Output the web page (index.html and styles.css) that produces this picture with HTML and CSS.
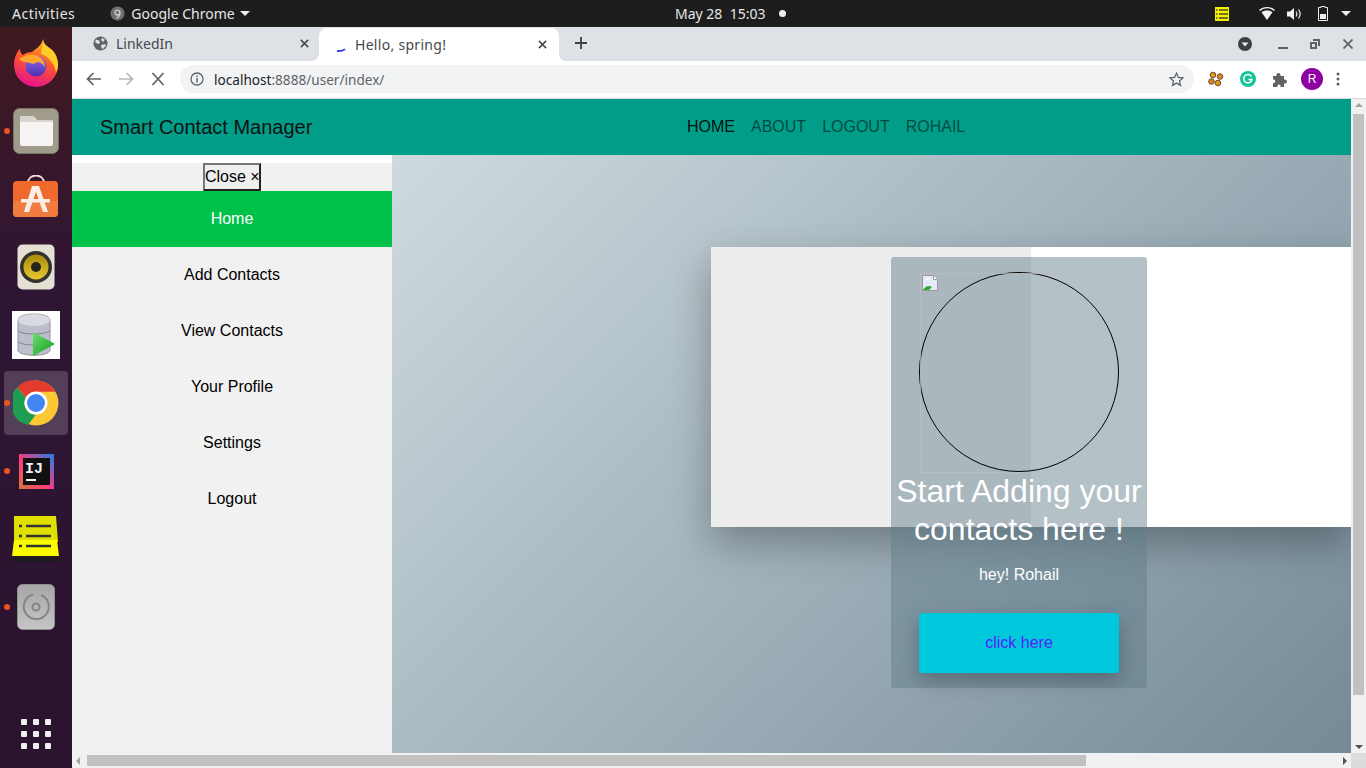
FILE: index.html
```html
<!DOCTYPE html>
<html lang="en">
<head>
    <meta charset="UTF-8">
    <title>Hello, spring!</title>
    <link rel="stylesheet" href="styles.css">
</head>
<body>
    <div class="topbar">
        <span class="activities">Activities</span>
        <div class="app-menu">
            <svg width="15" height="15" viewBox="0 0 16 16"><circle cx="8" cy="8" r="7.5" fill="#6f6f6f"/><circle cx="8" cy="7" r="2.6" fill="none" stroke="#ccc" stroke-width="1.4"/><path d="M10.6 7c0 3-1.5 5-3.6 6" fill="none" stroke="#ccc" stroke-width="1.4"/></svg>
            <span>Google Chrome</span>
            <i class="caret"></i>
        </div>
        <div class="clock">May 28&nbsp;&nbsp;15:03<i class="clock-dot"></i></div>
        <div class="tray">
            <svg class="tray-notes" width="14" height="14" viewBox="0 0 14 14"><rect width="14" height="14" fill="#f3f000"/><path d="M1 3h1.500M4 3h9M1 7h1.500M4 7h9M1 11h1.500M4 11h9" stroke="#4a4a20" stroke-width="1.500"/></svg>
            <svg class="tray-wifi" width="16" height="13" viewBox="0 0 16 13"><path d="M.5 3.500C4.500-.3 11.500-.3 15.500 3.500" fill="none" stroke="#f2f2f2" stroke-width="1.300"/><path d="M2.500 5.300C5.500 3 10.500 3 13.500 5.300L8 13z" fill="#f2f2f2"/></svg>
            <svg class="tray-vol" width="15" height="14" viewBox="0 0 15 14"><path d="M0 4.500h3L7 1v12L3 9.500H0z" fill="#f2f2f2"/><path d="M9 4.500c1 1.500 1 3.500 0 5M11.500 2.500c2 2.800 2 6.200 0 9" fill="none" stroke="#f2f2f2" stroke-width="1.200"/></svg>
            <svg class="tray-bat" width="10" height="15" viewBox="0 0 10 15"><path d="M3 .5h4v1h2.500v13H.5v-13H3z" fill="none" stroke="#eee"/><rect x="2" y="8" width="6" height="5" fill="#eee"/></svg>
            <i class="caret"></i>
        </div>
    </div>

    <div class="desktop">
        <div class="dock">
            <div class="dock-item">
                <svg width="46" height="48" viewBox="0 0 46 48">
                    <defs>
                        <linearGradient id="fxA" x1=".7" y1="0" x2=".4" y2="1"><stop offset="0" stop-color="#ffbd1f"/><stop offset=".45" stop-color="#ff5a2a"/><stop offset="1" stop-color="#e6128e"/></linearGradient>
                        <linearGradient id="fxB" x1="0" y1="0" x2="0" y2="1"><stop offset="0" stop-color="#8f6cf0"/><stop offset="1" stop-color="#4f2fb0"/></linearGradient>
                    </defs>
                    <path d="M30 0c0 6 6 8 10 12 4 5 5 10 5 14a22 22 0 1 1-44 0c0-6 2-12 6-16 0 3 1 5 3 6 2-2 6-3 9-3 3-3 9-5 11-13z" fill="url(#fxA)"/>
                    <path d="M30 0c0 6 6 8 10 12 4 5 5 10 5 14 0 3-1 6-2 8-1-8-6-16-15-19 1-5 2-11 2-15z" fill="#ffcd2a"/>
                    <circle cx="23" cy="27" r="10.500" fill="url(#fxB)"/>
                    <path d="M6 20c5-3 9-5 14-4 7 0 12 5 12 12-3-5-8-6-11-3-3-1-6-1-8-2-3 0-5-1-7-3z" fill="#ffa62b"/>
                </svg>
            </div>
            <div class="dock-item dot">
                <svg width="46" height="46" viewBox="0 0 46 46"><rect x=".5" y=".5" width="45" height="45" rx="6" fill="#a09b8b" stroke="#77746a"/><path d="M7 10q0-2 2-2h11l4 4h14q2 0 2 2v22q0 2-2 2H9q-2 0-2-2z" fill="#f6f5f3"/><path d="M7 14h33v-1q0-1-2-1H24l-4-4H9q-2 0-2 2z" fill="#d8d5cf"/></svg>
            </div>
            <div class="dock-item">
                <svg width="46" height="48" viewBox="0 0 46 48"><path d="M15 8c0-10 16-10 16 0" fill="none" stroke="#efe2cf" stroke-width="1.800"/><rect y="6" width="45" height="36" rx="4" fill="#f0692d"/><path d="M0 26h45v12q0 4-4 4H4q-4 0-4-4z" fill="#f27c40"/><path d="M19 11h7l9 26h-5l-7-20-7 20h-5z" fill="#fbeee6"/><rect x="8" y="24" width="29" height="3.500" fill="#fbeee6"/></svg>
            </div>
            <div class="dock-item">
                <svg width="38" height="46" viewBox="0 0 38 46"><defs><linearGradient id="spk" x1="0" y1="0" x2="0" y2="1"><stop offset="0" stop-color="#a88b0c"/><stop offset="1" stop-color="#e8c82e"/></linearGradient></defs><rect width="37" height="45" x=".5" y=".5" rx="5" fill="#e4e0d3"/><circle cx="19" cy="23" r="16" fill="#33322e"/><circle cx="19" cy="23" r="12.500" fill="url(#spk)"/><circle cx="19" cy="23" r="5" fill="#26251c"/></svg>
            </div>
            <div class="dock-item">
                <svg width="48" height="48" viewBox="0 0 48 48"><defs><linearGradient id="playG" x1="0" y1="0" x2="1" y2="1"><stop offset="0" stop-color="#6fe06f"/><stop offset="1" stop-color="#0e9a1e"/></linearGradient></defs><rect width="48" height="48" fill="#fff"/><path d="M6 9c0-8 32-8 32 0v30c0 7-32 7-32 0z" fill="#bdbecb" stroke="#92929e"/><ellipse cx="22" cy="9" rx="16" ry="6" fill="#d9d9e2"/><path d="M6 20c6 4 26 4 32 0M6 31c6 4 26 4 32 0" fill="none" stroke="#85858f"/><path d="M21 21l22 12-22 12z" fill="url(#playG)"/></svg>
            </div>
            <div class="dock-item dot running">
                <svg width="46" height="46" viewBox="0 0 46 46"><circle cx="23" cy="23" r="22.500" fill="#fcc934"/><path d="M23 .5a22.500 22.500 0 0 1 19.500 11.250H23a11 11 0 0 0-10 6L4 7.500A22.500 22.500 0 0 1 23 .5z" fill="#e33b2e"/><path d="M4 7.500L13 18a11 11 0 0 0 10 16.500L15 45A22.500 22.500 0 0 1 4 7.500z" fill="#1e9e50"/><circle cx="23" cy="23" r="11.500" fill="#fff"/><circle cx="23" cy="23" r="9" fill="#4285f4"/></svg>
            </div>
            <div class="dock-item dot">
                <svg width="35" height="35" viewBox="0 0 35 35"><defs><linearGradient id="ij" x1="0" y1="1" x2="1" y2="0"><stop offset="0" stop-color="#d9763a"/><stop offset=".45" stop-color="#fc3a80"/><stop offset="1" stop-color="#1f7fe5"/></linearGradient></defs><rect width="35" height="35" fill="url(#ij)"/><rect x="4" y="4" width="27" height="27" fill="#111"/><text x="6" y="19" class="ij-text">IJ</text><rect x="7" y="25" width="10" height="2" fill="#f2f2f2"/></svg>
            </div>
            <div class="dock-item">
                <svg width="48" height="46" viewBox="0 0 48 46"><rect x="2" y="41" width="46" height="5" fill="#1c1a1c"/><path d="M2 0h42l2 26H2z" fill="#dfdf00"/><path d="M2 24h43l2 16H0z" fill="#fbfb00"/><path d="M7 10h3M14 10h25M7 20h3M14 20h25M7 30h3M14 30h25" stroke="#333" stroke-width="2.500"/></svg>
            </div>
            <div class="dock-item dot">
                <svg width="38" height="46" viewBox="0 0 38 46"><defs><linearGradient id="hd" x1="0" y1="0" x2="0" y2="1"><stop offset="0" stop-color="#a6a6a6"/><stop offset="1" stop-color="#c6c6c6"/></linearGradient></defs><rect width="37" height="45" x=".5" y=".5" rx="5" fill="url(#hd)" stroke="#8f8f8f"/><path d="M24 11a12.500 12.500 0 1 1-8-.5" fill="none" stroke="#858585" stroke-width="2"/><circle cx="19" cy="23" r="3.500" fill="none" stroke="#858585" stroke-width="2"/></svg>
            </div>
            <div class="dock-grid">
                <i></i><i></i><i></i><i></i><i></i><i></i><i></i><i></i><i></i>
            </div>
        </div>

        <div class="browser">
            <div class="tabstrip">
                <div class="tab">
                    <svg width="15" height="15" viewBox="0 0 15 15"><circle cx="7.500" cy="7.500" r="7" fill="#5f6368"/><path d="M3 3.500l3 1 1 2.500-2 1-3-2zM9 2l3 1.500-2 2.500-2-2zM8 9l4-1 1 1.500-3 3.500-1.500-1z" fill="#dee1e6"/></svg>
                    <span class="tab-title">LinkedIn</span>
                    <svg class="tab-close" width="9" height="9" viewBox="0 0 10 10"><path d="M1 1l8 8M9 1l-8 8" stroke="#46484c" stroke-width="1.700"/></svg>
                </div>
                <div class="tab tab-active">
                    <svg class="spinner" width="15" height="15" viewBox="0 0 15 15"><path d="M5 14c3 .3 6 0 8-1.800" fill="none" stroke="#2a35e8" stroke-width="1.800"/></svg>
                    <span class="tab-title">Hello, spring!</span>
                    <svg class="tab-close" width="9" height="9" viewBox="0 0 10 10"><path d="M1 1l8 8M9 1l-8 8" stroke="#46484c" stroke-width="1.700"/></svg>
                </div>
                <svg class="new-tab" width="12" height="12" viewBox="0 0 12 12"><path d="M6 0v12M0 6h12" stroke="#3c4043" stroke-width="1.800"/></svg>
                <div class="win-controls">
                    <svg width="14" height="14" viewBox="0 0 14 14"><circle cx="7" cy="7" r="7" fill="#3c4043"/><path d="M3.500 5.500h7L7 9.500z" fill="#eee"/></svg>
                    <svg class="win-min" width="10" height="10" viewBox="0 0 10 10"><rect y="8" width="10" height="2" fill="#5f6368"/></svg>
                    <svg class="win-max" width="10" height="10" viewBox="0 0 10 10"><path d="M3 0h7v7H8V2H3z M0 3h7v7H0z" fill="#5f6368"/><rect x="2" y="5" width="3" height="3" fill="#dee1e6"/></svg>
                    <svg class="win-close" width="10" height="10" viewBox="0 0 10 10"><path d="M.5.500l9 9M9.500.500l-9 9" stroke="#5f6368" stroke-width="1.800"/></svg>
                </div>
            </div>

            <div class="toolbar">
                <svg class="nav-icon" width="16" height="14" viewBox="0 0 16 14"><path d="M15 7H2M7.500 1L1.500 7l6 6" fill="none" stroke="#5f6368" stroke-width="1.700"/></svg>
                <svg class="nav-icon" width="16" height="14" viewBox="0 0 16 14"><path d="M1 7h13M8.500 1l6 6-6 6" fill="none" stroke="#b4b6b9" stroke-width="1.700"/></svg>
                <svg class="nav-icon" width="16" height="14" viewBox="0 0 16 14"><path d="M2.500 1l11 12M13.500 1l-11 12" fill="none" stroke="#5f6368" stroke-width="1.700"/></svg>
                <div class="omnibox">
                    <svg width="14" height="14" viewBox="0 0 14 14"><circle cx="7" cy="7" r="6" fill="none" stroke="#5f6368" stroke-width="1.300"/><path d="M7 6v4.500M7 3.500v1.500" stroke="#5f6368" stroke-width="1.500"/></svg>
                    <span class="url"><b>localhost</b>:8888/user/index/</span>
                    <svg class="star" width="15" height="15" viewBox="0 0 15 15"><path d="M7.500 1.200l1.900 4.200 4.500.500-3.400 3 1 4.500-4-2.300-4 2.300 1-4.500-3.400-3 4.500-.5z" fill="none" stroke="#5f6368" stroke-width="1.300"/></svg>
                </div>
                <div class="ext-icons">
                    <svg width="16" height="16" viewBox="0 0 16 16"><circle cx="5" cy="4" r="2.800" fill="#e09a12" stroke="#6b4a3a"/><circle cx="12" cy="5.500" r="2.800" fill="#d9871c" stroke="#6b4a3a"/><circle cx="3.500" cy="10.500" r="2.800" fill="#d9871c" stroke="#6b4a3a"/><circle cx="10" cy="12" r="2.800" fill="#e09a12" stroke="#6b4a3a"/></svg>
                    <svg width="16" height="16" viewBox="0 0 16 16"><circle cx="8" cy="8" r="8" fill="#15c39a"/><path d="M11.500 5.500a4.200 4.200 0 1 0 .5 3H8.500" fill="none" stroke="#fff" stroke-width="1.500"/></svg>
                    <svg width="16" height="16" viewBox="0 0 16 16"><path d="M1 5h3.500c-1-4 5-4 4 0H12v3.500c4-1 4 5 0 4V16H8.500c1-3.500-4-3.500-3 0H1v-4c3 1 3-4.500 0-3.500z" fill="#5f6368"/></svg>
                    <div class="avatar">R</div>
                    <svg width="4" height="14" viewBox="0 0 4 14"><circle cx="2" cy="2" r="1.500" fill="#5f6368"/><circle cx="2" cy="7" r="1.500" fill="#5f6368"/><circle cx="2" cy="12" r="1.500" fill="#5f6368"/></svg>
                </div>
            </div>

            <div class="viewport">
                <div class="page">
                    <nav class="navbar">
                        <a class="brand">Smart Contact Manager</a>
                        <ul class="nav-links">
                            <li class="active">HOME</li>
                            <li>ABOUT</li>
                            <li>LOGOUT</li>
                            <li>ROHAIL</li>
                        </ul>
                    </nav>
                    <div class="content">
                        <aside class="sidebar">
                            <button class="close-btn">Close ×</button>
                            <a class="side-link side-active">Home</a>
                            <a class="side-link">Add Contacts</a>
                            <a class="side-link">View Contacts</a>
                            <a class="side-link">Your Profile</a>
                            <a class="side-link">Settings</a>
                            <a class="side-link">Logout</a>
                        </aside>
                        <main class="hero">
                            <div class="panel">
                                <div class="panel-left"></div>
                                <div class="card">
                                    <div class="avatar-img">
                                        <div class="broken-box">
                                            <svg width="16" height="16" viewBox="0 0 16 16"><path d="M.5.500h11l4 4v11H.5z" fill="#e6eaf8" stroke="#9a9a9a"/><path d="M11.500.500v4h4" fill="#fff" stroke="#9a9a9a"/><path d="M3 5q2-3 5-1-2 1-5 1z" fill="#fff"/><path d="M1 15q4-6 9-3l-3 3z" fill="#2fa83a"/></svg>
                                        </div>
                                    </div>
                                    <h1>Start Adding your contacts here !</h1>
                                    <p>hey! Rohail</p>
                                    <a class="cta">click here</a>
                                </div>
                            </div>
                        </main>
                    </div>
                </div>
                <div class="vscroll">
                    <i class="arrow-up"></i>
                    <div class="vthumb"></div>
                    <i class="arrow-down"></i>
                </div>
                <div class="hscroll">
                    <i class="arrow-left"></i>
                    <div class="hthumb"></div>
                    <i class="arrow-right"></i>
                </div>
                <div class="scroll-corner"></div>
            </div>
        </div>
    </div>
</body>
</html>
```

FILE: styles.css
```css
html, body {
    margin: 0;
    padding: 0;
    height: 768px;
    overflow: hidden;
}
body {
    font-family: "Liberation Sans", Arial, sans-serif;
    display: flex;
    flex-direction: column;
    width: 1366px;
}

/* ubuntu top bar */
.topbar {
    height: 27px;
    background: #1d1d1d;
    color: #e6e6e6;
    font-family: "Noto Sans", sans-serif;
    font-size: 14px;
    display: flex;
    align-items: center;
    position: relative;
    flex: none;
}
.activities {
    margin-left: 12px;
    letter-spacing: 0.5px;
}
.app-menu {
    margin-left: 35px;
    display: flex;
    align-items: center;
    gap: 6px;
}
.caret {
    display: inline-block;
    border-left: 5px solid transparent;
    border-right: 5px solid transparent;
    border-top: 5px solid #eee;
}
.app-menu .caret {
    margin-left: -1px;
}
.clock {
    position: absolute;
    left: 675px;
    top: 4px;
    display: flex;
    align-items: center;
}
.clock-dot {
    width: 7px;
    height: 7px;
    background: #eee;
    border-radius: 50%;
    margin-left: 14px;
}
.tray {
    margin-left: auto;
    margin-right: 15px;
    display: flex;
    align-items: center;
}
.tray-wifi { margin-left: 30px; }
.tray-vol { margin-left: 12px; }
.tray-bat { margin-left: 16px; }
.tray .caret { margin-left: 13px; }

.desktop {
    flex: 1;
    display: flex;
    min-height: 0;
}

/* launcher */
.dock {
    width: 72px;
    flex: none;
    background: linear-gradient(180deg, #41191f 0%, #2f1534 35%, #2b1430 100%);
    display: flex;
    flex-direction: column;
    align-items: center;
    padding-top: 4px;
    box-sizing: border-box;
}
.dock-item {
    width: 64px;
    height: 64px;
    margin-bottom: 4px;
    display: flex;
    align-items: center;
    justify-content: center;
    position: relative;
    border-radius: 4px;
}
.dock-item.running {
    background: rgba(255, 255, 255, 0.18);
}
.dock-item.dot::before {
    content: "";
    position: absolute;
    left: 0;
    top: 29px;
    width: 6px;
    height: 6px;
    border-radius: 50%;
    background: #e95420;
}
.ij-text {
    font-family: "Liberation Mono", monospace;
    font-weight: bold;
    font-size: 15px;
    fill: #f2f2f2;
}
.dock-grid {
    margin-top: auto;
    margin-bottom: 19px;
    display: grid;
    grid-template-columns: repeat(3, 6px);
    gap: 6px;
}
.dock-grid i {
    height: 6px;
    background: #eee;
    border-radius: 1px;
}

/* chrome */
.browser {
    flex: 1;
    display: flex;
    flex-direction: column;
    min-width: 0;
}
.tabstrip {
    height: 34px;
    background: #dee1e6;
    display: flex;
    align-items: stretch;
    flex: none;
    color: #3c4043;
    font-family: "Noto Sans", sans-serif;
    font-size: 14px;
}
.tab {
    width: 247px;
    display: flex;
    align-items: center;
    box-sizing: border-box;
    padding: 0 10px 2px 21px;
    position: relative;
}
.tab-title {
    margin-left: 8px;
    flex: 1;
    color: #45484c;
}
.tab-active {
    width: 240px;
    background: #fff;
    margin-top: 1px;
    border-radius: 8px 8px 0 0;
    padding: 0 12px 1px 13px;
}
.tab-active .tab-title {
    margin-left: 8px;
    letter-spacing: 0.3px;
}
.tab-active::before,
.tab-active::after {
    content: "";
    position: absolute;
    bottom: 0;
    width: 8px;
    height: 8px;
}
.tab-active::before {
    left: -8px;
    background: radial-gradient(circle at 0 0, transparent 8px, #fff 8px);
}
.tab-active::after {
    right: -8px;
    background: radial-gradient(circle at 100% 0, transparent 8px, #fff 8px);
}
.new-tab {
    align-self: center;
    margin-left: 16px;
    margin-bottom: 2px;
}
.win-controls {
    margin-left: auto;
    display: flex;
    align-items: center;
    padding-right: 13px;
}
.win-min { margin-left: 26px; }
.win-max { margin-left: 22px; }
.win-close { margin-left: 23px; }

.toolbar {
    height: 28px;
    padding: 4px 0 5px 14px;
    flex: none;
    background: #fff;
    border-bottom: 1px solid #d9dbdf;
    display: flex;
    align-items: center;
}
.nav-icon {
    margin-right: 16px;
}
.omnibox {
    width: 1014px;
    height: 28px;
    margin-left: -2px;
    background: #f1f3f4;
    border-radius: 14px;
    display: flex;
    align-items: center;
    padding: 0 10px;
    box-sizing: border-box;
}
.url {
    margin-left: 10px;
    font-family: "Noto Sans", sans-serif;
    font-size: 13.6px;
    color: #5f6368;
    flex: 1;
}
.url b {
    font-weight: normal;
    color: #202124;
}
.ext-icons {
    display: flex;
    align-items: center;
    margin-left: 14px;
    gap: 16px;
}
.avatar {
    width: 22px;
    height: 22px;
    border-radius: 50%;
    background: #8e00a4;
    color: #fff;
    font-size: 12px;
    text-align: center;
    line-height: 22px;
    margin: 0 -3px;
}

/* page area */
.viewport {
    flex: 1;
    min-height: 0;
    display: grid;
    grid-template-columns: 1279px 15px;
    grid-template-rows: 654px 15px;
}
.page {
    overflow: hidden;
    display: flex;
    flex-direction: column;
}
.navbar {
    height: 56px;
    flex: none;
    background: #009d88;
    display: flex;
    align-items: center;
    padding-left: 28px;
}
.brand {
    font-size: 20px;
    color: #111;
    width: 587px;
}
.nav-links {
    list-style: none;
    margin: 0;
    padding: 0;
    display: flex;
    gap: 16px;
    font-size: 16px;
    color: rgba(0, 0, 0, 0.55);
}
.nav-links .active {
    color: rgba(0, 0, 0, 0.9);
}
.content {
    flex: 1;
    display: flex;
    min-height: 0;
}
.sidebar {
    width: 320px;
    flex: none;
    background: #f1f1f1;
    border-top: 8px solid #fff;
    display: flex;
    flex-direction: column;
    align-items: center;
}
.close-btn {
    font-family: "Liberation Sans", Arial, sans-serif;
    font-size: 16px;
    height: 28px;
    width: 58px;
    padding: 0;
    color: #000;
    background: #efefef;
    border: 2px solid;
    border-color: #767676 #222 #222 #767676;
    white-space: nowrap;
}
.side-link {
    width: 100%;
    height: 56px;
    line-height: 56px;
    text-align: center;
    font-size: 16px;
    color: #000;
}
.side-active {
    background: #00c24a;
    color: #fff;
}
.hero {
    flex: 1;
    background: linear-gradient(135deg, #cfdadf 0%, #748a97 100%);
    padding: 92px 0 0 319px;
    overflow: hidden;
}
.panel {
    height: 280px;
    background: #fff;
    position: relative;
    box-shadow: 0 16px 38px rgba(0, 0, 0, 0.3);
}
.panel-left {
    width: 320px;
    height: 100%;
    background: #ededed;
}
.card {
    position: absolute;
    left: 180px;
    top: 10px;
    width: 256px;
    height: 431px;
    box-sizing: border-box;
    background: rgba(96, 125, 139, 0.47);
    border-radius: 3px;
    padding-top: 15px;
    display: flex;
    flex-direction: column;
    align-items: center;
    color: #fff;
    text-align: center;
}
.avatar-img {
    width: 198px;
    height: 198px;
    border: 1px solid #000;
    border-radius: 50%;
    flex: none;
    position: relative;
}
.broken-box {
    position: absolute;
    left: 0;
    top: 0;
    width: 196px;
    height: 196px;
    border: 1px solid rgba(190, 190, 190, 0.7);
    padding: 1px;
}
.broken-box svg {
    display: block;
}
.card h1 {
    font-size: 32px;
    font-weight: normal;
    line-height: 38px;
    margin: 0;
}
.card p {
    font-size: 16px;
    margin: 15px 0 0;
    line-height: 24px;
}
.cta {
    display: block;
    width: 200px;
    height: 60px;
    margin-top: 26px;
    line-height: 60px;
    background: #00c8dc;
    color: #5522ff;
    font-size: 16px;
    border-radius: 3px;
    box-shadow: 0 8px 20px rgba(0, 0, 0, 0.25);
}

/* scrollbars */
.vscroll {
    background: #f1f1f1;
    display: flex;
    flex-direction: column;
    align-items: center;
}
.vthumb {
    width: 11px;
    height: 581px;
    background: #c1c1c1;
    margin-top: 7px;
}
.arrow-up {
    margin-top: 4px;
    border-left: 4px solid transparent;
    border-right: 4px solid transparent;
    border-bottom: 4px solid #a3a3a3;
}
.arrow-down {
    margin-top: auto;
    margin-bottom: 4px;
    border-left: 4px solid transparent;
    border-right: 4px solid transparent;
    border-top: 4px solid #505050;
}
.hscroll {
    background: #f1f1f1;
    display: flex;
    align-items: center;
}
.hthumb {
    width: 999px;
    height: 11px;
    background: #c1c1c1;
    margin-left: 7px;
}
.arrow-left {
    margin-left: 4px;
    border-top: 4px solid transparent;
    border-bottom: 4px solid transparent;
    border-right: 4px solid #a3a3a3;
}
.arrow-right {
    margin-left: auto;
    margin-right: 4px;
    border-top: 4px solid transparent;
    border-bottom: 4px solid transparent;
    border-left: 4px solid #505050;
}
.scroll-corner {
    background: #dcdcdc;
}
```
